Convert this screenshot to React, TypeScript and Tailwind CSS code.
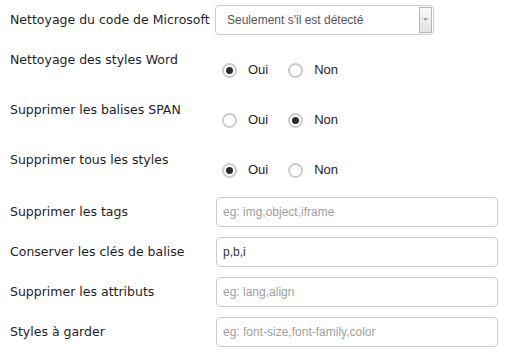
import React, { useState } from 'react';

const labelCls = "w-[205px] shrink-0 whitespace-nowrap text-[12.5px] leading-[18px] text-[#1e1e1e] font-['DejaVu_Sans',Verdana,sans-serif]";

function Radio({ checked, label, onClick }: { checked: boolean; label: string; onClick: () => void }) {
  return (
    <label className="flex items-center cursor-pointer" onClick={onClick}>
      <span className="w-[15px] h-[15px] rounded-full border-2 border-[#cbcbcb] bg-white flex items-center justify-center">
        {checked && <span className="w-[7px] h-[7px] rounded-full bg-[#2e2e2e]" />}
      </span>
      <span className="ml-[11px] text-[13px] text-[#1e1e1e] font-['Liberation_Sans',Arial,sans-serif]">{label}</span>
    </label>
  );
}

function RadioRow({ label, value, onChange, h }: { label: string; value: boolean; onChange: (v: boolean) => void; h: string }) {
  return (
    <div className={`flex pl-[10px] ${h}`}>
      <div className={`${labelCls} pt-[1px]`}>{label}</div>
      <div className="flex gap-[20px] mt-[10px] h-[20px] items-center pl-[7px]">
        <Radio checked={value} label="Oui" onClick={() => onChange(true)} />
        <Radio checked={!value} label="Non" onClick={() => onChange(false)} />
      </div>
    </div>
  );
}

function TextRow({ label, placeholder, value }: { label: string; placeholder: string; value?: string }) {
  return (
    <div className="flex items-center pl-[10px] h-[40px]">
      <div className={labelCls}>{label}</div>
      <input
        className="ml-[1px] w-[282px] h-[30px] border border-[#cccccc] rounded-[4px] px-[6px] text-[12px] text-[#333] placeholder:text-[#a0a0a0] font-['Liberation_Sans',Arial,sans-serif] outline-none"
        placeholder={placeholder}
        defaultValue={value}
      />
    </div>
  );
}

export default function App() {
  const [word, setWord] = useState(true);
  const [span, setSpan] = useState(false);
  const [all, setAll] = useState(true);

  return (
    <div className="w-[508px] h-[356px] bg-white pt-[5px]">
      <div className="flex items-center pl-[10px] h-[29px]">
        <div className={labelCls}>Nettoyage du code de Microsoft</div>
        <div className="relative w-[219px] h-[30px] border border-[#cccccc] rounded-[4px] flex items-center pl-[11px]">
          <span className="text-[12px] text-[#555] font-['Liberation_Sans',Arial,sans-serif]">Seulement s'il est détecté</span>
          <div className="absolute right-[1px] top-[1px] bottom-[1px] w-[13px] border border-[#b5b8c0] bg-gradient-to-b from-[#f8f8f8] to-[#e2e3e6] flex items-center justify-center">
            <svg width="5" height="3" viewBox="0 0 5 3">
              <path d="M0 0h5L2.5 3z" fill="#9aa0a8" />
            </svg>
          </div>
        </div>
      </div>
      <div className="mt-[16px]">
        <RadioRow label="Nettoyage des styles Word" value={word} onChange={setWord} h="h-[50px]" />
        <RadioRow label="Supprimer les balises SPAN" value={span} onChange={setSpan} h="h-[50px]" />
        <RadioRow label="Supprimer tous les styles" value={all} onChange={setAll} h="h-[42px]" />
      </div>
      <TextRow label="Supprimer les tags" placeholder="eg: img,object,iframe" />
      <TextRow label="Conserver les clés de balise" placeholder="" value="p,b,i" />
      <TextRow label="Supprimer les attributs" placeholder="eg: lang,align" />
      <TextRow label="Styles à garder" placeholder="eg: font-size,font-family,color" />
    </div>
  );
}
